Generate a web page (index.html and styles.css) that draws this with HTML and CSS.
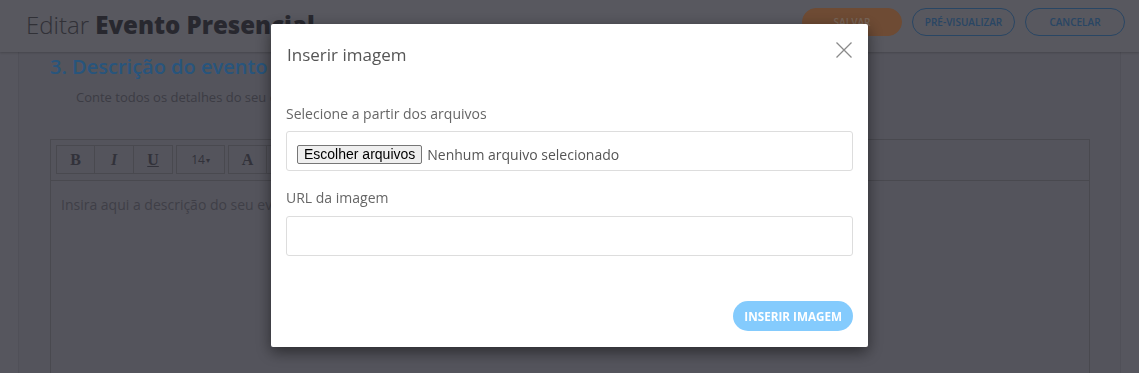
FILE: index.html
```html
<!DOCTYPE html>
<html lang="pt-BR">
<head>
<meta charset="utf-8">
<title>Editar Evento Presencial</title>
<link rel="stylesheet" href="styles.css">
</head>
<body>
<header class="topbar">
  <h1 class="page-title"><span class="light">Editar</span> <strong>Evento Presencial</strong></h1>
  <div class="actions">
    <button class="btn btn-save">Salvar</button>
    <button class="btn btn-outline">Pré-visualizar</button>
    <button class="btn btn-outline">Cancelar</button>
  </div>
</header>

<main class="card">
  <h2 class="section-title">3. Descrição do evento</h2>
  <p class="section-sub">Conte todos os detalhes do seu evento, como a programação e os diferenciais da sua produção!</p>
  <div class="editor">
    <div class="toolbar">
      <div class="tb-group">
        <span class="tb-btn serif bold">B</span>
        <span class="tb-btn serif italic">I</span>
        <span class="tb-btn serif bold underline">U</span>
      </div>
      <div class="tb-group">
        <span class="tb-btn tb-wide">14<span class="caret">▾</span></span>
      </div>
      <div class="tb-group">
        <span class="tb-btn serif bold">A</span>
        <span class="tb-btn serif">≡</span>
        <span class="tb-btn serif">☰</span>
      </div>
    </div>
    <div class="editor-body">Insira aqui a descrição do seu evento...</div>
  </div>
</main>

<div class="backdrop">
  <div class="modal">
    <div class="modal-header">
      <h3 class="modal-title">Inserir imagem</h3>
      <button class="close" aria-label="Fechar">
        <svg width="16" height="16" viewBox="0 0 16 16"><path d="M0.5 0.5 L15.5 15.5 M15.5 0.5 L0.5 15.5" stroke="#8a8a8a" stroke-width="1.3" fill="none"/></svg>
      </button>
    </div>
    <div class="modal-body">
      <label class="field-label">Selecione a partir dos arquivos</label>
      <div class="field file-field">
        <span class="file-btn">Escolher arquivos</span>
        <span class="file-name">Nenhum arquivo selecionado</span>
      </div>
      <label class="field-label second">URL da imagem</label>
      <div class="field"></div>
    </div>
    <div class="modal-footer">
      <button class="btn-insert">Inserir imagem</button>
    </div>
  </div>
</div>
</body>
</html>
```

FILE: styles.css
```css
* { box-sizing: border-box; }

html, body {
  margin: 0;
  height: 100%;
  overflow: hidden;
}

body {
  font-family: "Open Sans", "Liberation Sans", sans-serif;
  background: #acacbc;
  color: #333;
}

/* ---------- top bar ---------- */
.topbar {
  height: 52px;
  display: flex;
  align-items: center;
  justify-content: space-between;
  padding: 0 14px 0 26px;
  background: #b0b0be;
  box-shadow: 0 1px 2px rgba(0,0,0,0.18);
  position: relative;
  z-index: 1;
}

.page-title {
  margin: 0;
  font-size: 24px;
  line-height: 32px;
  font-weight: 700;
  color: #50505e;
  padding-bottom: 2px;
}

.page-title .light {
  font-weight: 300;
  color: #62626f;
}

.actions {
  display: flex;
  gap: 10px;
  align-self: flex-start;
  margin-top: 8px;
}

.btn {
  height: 28px;
  width: 100px;
  border-radius: 14px;
  font-family: "Open Sans", sans-serif;
  font-size: 10px;
  font-weight: 600;
  text-transform: uppercase;
  padding: 0;
  cursor: pointer;
}

.btn-save {
  background: #dc9668;
  border: 1px solid #dc9668;
  color: #efc9b0;
}

.btn-outline {
  width: 103px;
  background: transparent;
  border: 1px solid #528cc8;
  color: #528cc8;
}

.btn-outline + .btn-outline { width: 100px; }

/* ---------- card ---------- */
.card {
  margin: 0 18px;
  height: calc(100% - 52px);
  background: #a9a9b9;
  border-left: 1px solid #a0a0b0;
  border-right: 1px solid #a0a0b0;
  padding: 1px 30px 0 31px;
  display: flex;
  flex-direction: column;
}

.section-title {
  margin: 0;
  font-size: 20px;
  line-height: 28px;
  font-weight: 600;
  color: #50aaf8;
}

.section-sub {
  margin: 7px 0 0 26px;
  font-size: 13px;
  line-height: 18px;
  color: #787888;
  white-space: nowrap;
  overflow: hidden;
}

.editor {
  margin-top: 33px;
  border: 1px solid #92929f;
  border-bottom: none;
  flex: 1;
  min-height: 0;
}

.toolbar {
  display: flex;
  gap: 3px;
  padding: 5px 5px 6px;
  border-bottom: 1px solid #92929f;
}

.tb-group { display: flex; }

.tb-btn {
  width: 39px;
  height: 29px;
  border: 1px solid #92929f;
  display: flex;
  align-items: center;
  justify-content: center;
  color: #646474;
  font-size: 12px;
}

.tb-btn + .tb-btn { border-left: none; width: 39px; }

.tb-wide { width: 49px; }

.serif { font-family: "Liberation Serif", serif; font-size: 16px; }
.bold { font-weight: 700; }
.italic { font-style: italic; font-weight: 700; }
.underline { text-decoration: underline; }

.caret { font-size: 8px; margin-left: 1px; }

.editor-body {
  padding: 14px 10px;
  font-size: 14px;
  line-height: 20px;
  color: #7e7e8e;
}

/* ---------- modal ---------- */
.backdrop {
  position: fixed;
  inset: 0;
  background: rgba(0,0,0,0.5);
  display: flex;
  justify-content: center;
  align-items: flex-start;
  padding-top: 24px;
  z-index: 10;
}

.modal {
  width: 597px;
  height: 323px;
  background: #fff;
  border-radius: 2px;
  box-shadow: 0 5px 15px rgba(0,0,0,0.5);
  display: flex;
  flex-direction: column;
}

.modal-header {
  display: flex;
  justify-content: space-between;
  align-items: flex-start;
  padding: 19px 16px 0 16px;
}

.modal-title {
  margin: 0;
  font-size: 17px;
  line-height: 24px;
  font-weight: 400;
  color: #555;
}

.close {
  background: none;
  border: none;
  padding: 0;
  margin-top: -1px;
  width: 16px;
  height: 16px;
  cursor: pointer;
}

.close svg { display: block; }

.modal-body {
  padding: 37px 15px 0;
  display: flex;
  flex-direction: column;
}

.field-label {
  font-size: 14px;
  line-height: 20px;
  color: #666;
  margin-bottom: 7px;
}

.field-label.second {
  margin-top: 17px;
  margin-bottom: 8px;
}

.field {
  height: 40px;
  border: 1px solid #ddd;
  border-radius: 3px;
}

.file-field {
  display: flex;
  align-items: center;
  padding: 0 10px;
  gap: 5px;
}

.file-btn {
  font-family: "Liberation Sans", Arial, sans-serif;
  font-size: 14px;
  line-height: 17px;
  color: #000;
  background: #efefef;
  border: 1px solid #767676;
  border-radius: 2px;
  padding: 0 6px;
  margin-top: 6px;
}

.file-name {
  font-size: 14px;
  color: #555;
  margin-top: 6px;
}

.modal-footer {
  margin-top: auto;
  display: flex;
  justify-content: flex-end;
  padding: 0 15px 16px;
}

.btn-insert {
  height: 30px;
  padding: 0 11px;
  border: none;
  border-radius: 15px;
  background: #84cbfd;
  color: #fff;
  font-family: "Open Sans", sans-serif;
  font-size: 11.7px;
  font-weight: 700;
  text-transform: uppercase;
  cursor: pointer;
}
```
